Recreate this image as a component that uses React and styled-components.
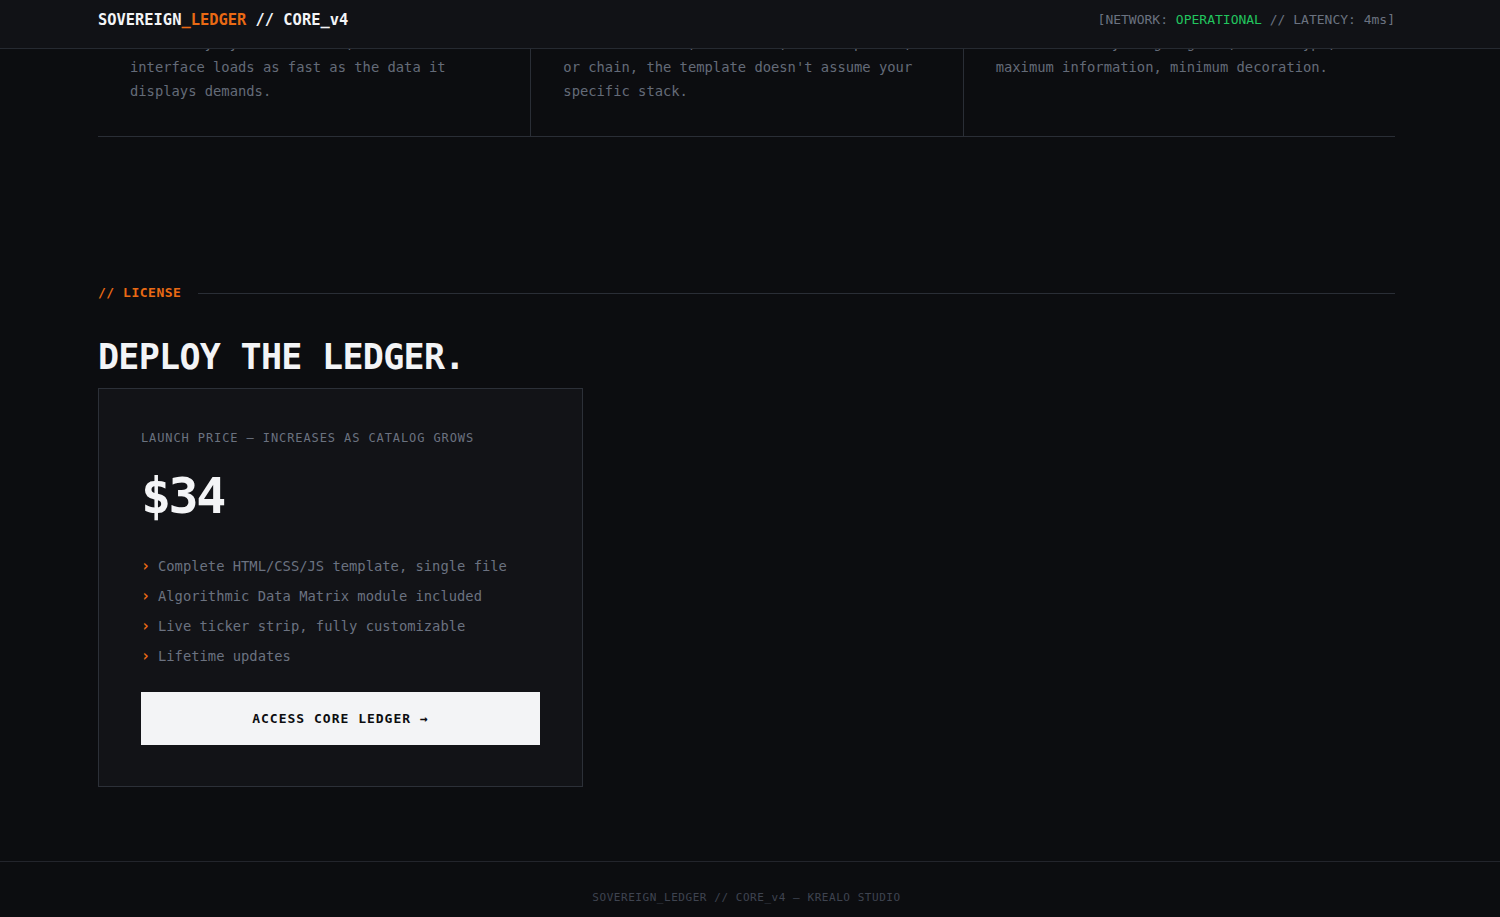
import React, { useLayoutEffect } from 'react'
import styled, { createGlobalStyle } from 'styled-components'

const mono = `"DejaVu Sans Mono", "Liberation Mono", monospace`

const GlobalStyle = createGlobalStyle`
  html, body {
    margin: 0;
    padding: 0;
    background: #0c0d10;
    color: #e5e7eb;
    font-family: ${mono};
    scrollbar-width: none;
  }
  body::-webkit-scrollbar { display: none; }
  * { box-sizing: border-box; }
`

const features = [
  {
    tag: '01 // SPEED',
    title: 'ZERO DEPENDENCIES',
    text: 'No frameworks, no build step, no runtime tax. Every byte is audited, so the whole interface loads as fast as the data it displays demands.',
  },
  {
    tag: '02 // AGNOSTIC',
    title: 'ANY DATA SOURCE',
    text: 'Data-source agnostic by design. Bring your own feeds: REST, WebSocket, RPC endpoints, or chain, the template doesn\'t assume your specific stack.',
  },
  {
    tag: '03 // DENSITY',
    title: 'TERMINAL AESTHETIC',
    text: 'Designed for traders and quants who read numbers all day. Tight grids, dense type, maximum information, minimum decoration.',
  },
]

const perks = [
  'Complete HTML/CSS/JS template, single file',
  'Algorithmic Data Matrix module included',
  'Live ticker strip, fully customizable',
  'Lifetime updates',
]

const App = () => {
  // land at the bottom of the page, the licence block and footer in view
  useLayoutEffect(() => {
    window.scrollTo(0, document.documentElement.scrollHeight)
  }, [])

  return (
    <>
      <GlobalStyle />
      <Header>
        <HeaderInner>
          <Logo>
            SOVEREIGN<Accent>_LEDGER</Accent> // CORE_v4
          </Logo>
          <Status>
            [NETWORK: <Ok>OPERATIONAL</Ok> // LATENCY: 4ms]
          </Status>
        </HeaderInner>
      </Header>

      <Main>
        <Wrap>
          <FeatureGrid>
            {features.map((f) => (
              <Feature key={f.tag}>
                <FeatureTag>{f.tag}</FeatureTag>
                <FeatureTitle>{f.title}</FeatureTitle>
                <FeatureText>{f.text}</FeatureText>
              </Feature>
            ))}
          </FeatureGrid>
        </Wrap>

        <License>
          <Wrap>
            <SectionLabel>
              <span>// LICENSE</span>
              <Rule />
            </SectionLabel>
            <Title>DEPLOY THE LEDGER.</Title>
            <PriceCard>
              <PriceNote>LAUNCH PRICE — INCREASES AS CATALOG GROWS</PriceNote>
              <Price>$34</Price>
              <Perks>
                {perks.map((p) => (
                  <Perk key={p}>
                    <Chevron>›</Chevron>
                    {p}
                  </Perk>
                ))}
              </Perks>
              <BuyButton>ACCESS CORE LEDGER →</BuyButton>
            </PriceCard>
          </Wrap>
        </License>
      </Main>

      <Footer>SOVEREIGN_LEDGER // CORE_v4 — KREALO STUDIO</Footer>
    </>
  )
}

const Header = styled.header`
  position: fixed;
  top: 0;
  left: 0;
  right: 0;
  z-index: 10;
  height: 49px;
  background: #111216;
  border-bottom: 1px solid #262a31;
`

const Wrap = styled.div`
  width: 1297px;
  margin-left: 98px;
`

const HeaderInner = styled(Wrap)`
  height: 48px;
  padding-bottom: 9px;
  display: flex;
  align-items: center;
  justify-content: space-between;
`

const Logo = styled.div`
  font-size: 15.4px;
  font-weight: 700;
  color: #f3f4f6;
`

const Accent = styled.span`
  color: #ea6a14;
`

const Status = styled.div`
  font-size: 13px;
  color: #6b7280;
`

const Ok = styled.span`
  color: #22c55e;
`

const Main = styled.main`
  padding-top: 160px;
`

const FeatureGrid = styled.div`
  display: grid;
  grid-template-columns: repeat(3, 1fr);
  border-top: 1px solid #2a2e36;
  border-bottom: 1px solid #2a2e36;
`

const Feature = styled.div`
  padding: 32px 32px 33px;
  & + & {
    border-left: 1px solid #2a2e36;
  }
`

const FeatureTag = styled.div`
  font-size: 12px;
  color: #ea6a14;
  letter-spacing: 0.08em;
  margin-bottom: 14px;
`

const FeatureTitle = styled.h3`
  margin: 0 0 12px;
  font-size: 18px;
  color: #f3f4f6;
`

const FeatureText = styled.p`
  margin: 0;
  font-size: 13.8px;
  line-height: 24px;
  color: #646b78;
`

const License = styled.section`
  padding: 148px 0 74px;
`

const SectionLabel = styled.div`
  display: flex;
  align-items: center;
  gap: 17px;
  font-size: 13px;
  line-height: 16px;
  font-weight: 700;
  letter-spacing: 0.04em;
  color: #ea6a14;
`

const Rule = styled.div`
  flex: 1;
  height: 1px;
  background: #2a2e36;
`

const Title = styled.h2`
  margin: 39px 0 13px;
  font-size: 35px;
  line-height: 35px;
  font-weight: 700;
  letter-spacing: -0.7px;
  color: #f3f4f6;
`

const PriceCard = styled.div`
  width: 485px;
  padding: 40px 42px 41px 42px;
  background: #121317;
  border: 1px solid #2c3038;
`

const PriceNote = styled.div`
  font-size: 12px;
  line-height: 18px;
  letter-spacing: 0.075em;
  color: #6b7280;
`

const Price = styled.div`
  margin-top: 24px;
  font-size: 50px;
  line-height: 50px;
  font-weight: 700;
  letter-spacing: -2.5px;
  color: #f3f4f6;
`

const Perks = styled.ul`
  list-style: none;
  margin: 30px 0 0;
  padding: 0;
`

const Perk = styled.li`
  display: flex;
  align-items: center;
  height: 30px;
  font-size: 13.8px;
  color: #6b7280;
`

const Chevron = styled.span`
  width: 17px;
  color: #ea6a14;
  font-weight: 700;
  font-size: 15px;
`

const BuyButton = styled.button`
  display: block;
  width: 100%;
  height: 53px;
  margin-top: 21px;
  border: none;
  background: #f3f4f6;
  color: #0c0d10;
  font-family: ${mono};
  font-size: 13px;
  font-weight: 700;
  letter-spacing: 1px;
  cursor: pointer;
`

const Footer = styled.footer`
  border-top: 1px solid #23252c;
  padding: 28px 7px 11px 0;
  font-size: 11px;
  line-height: 16px;
  letter-spacing: 0.05em;
  color: #3f4450;
  text-align: center;
`

export default App
